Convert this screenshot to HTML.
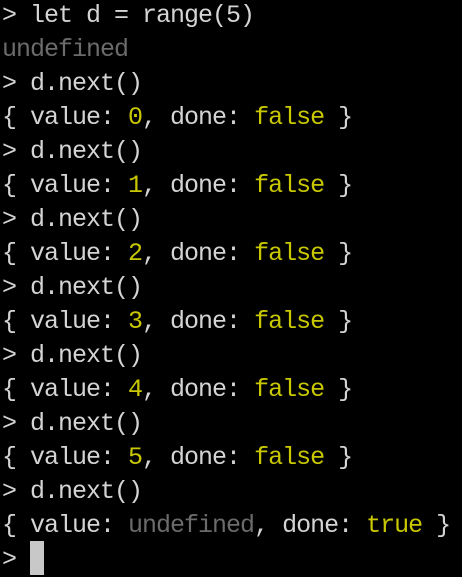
<!DOCTYPE html>
<html><head><style>
html,body{margin:0;padding:0;background:#000;width:462px;height:576px;overflow:hidden}
pre{margin:0;position:absolute;top:-1px;left:2px;font-family:"Liberation Mono",monospace;font-size:25px;letter-spacing:-1px;line-height:34px;color:#d4d4d4}
.y{color:#c9c800}.g{color:#6b6b6b}
.c{display:inline-block;width:14px;height:34px;background:#c8c8c8;vertical-align:top;margin-top:-2px}
</style></head><body><pre>&gt; let d = range(5)
<span class="g">undefined</span>
&gt; d.next()
{ value: <span class="y">0</span>, done: <span class="y">false</span> }
&gt; d.next()
{ value: <span class="y">1</span>, done: <span class="y">false</span> }
&gt; d.next()
{ value: <span class="y">2</span>, done: <span class="y">false</span> }
&gt; d.next()
{ value: <span class="y">3</span>, done: <span class="y">false</span> }
&gt; d.next()
{ value: <span class="y">4</span>, done: <span class="y">false</span> }
&gt; d.next()
{ value: <span class="y">5</span>, done: <span class="y">false</span> }
&gt; d.next()
{ value: <span class="g">undefined</span>, done: <span class="y">true</span> }
&gt; <span class="c"></span></pre></body></html>
